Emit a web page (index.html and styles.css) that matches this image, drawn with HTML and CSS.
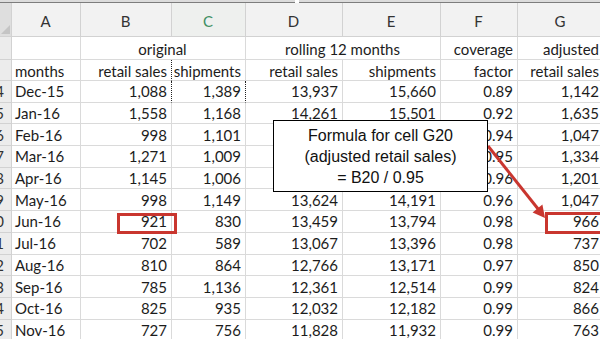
FILE: index.html
```html
<!DOCTYPE html>
<html>
<head>
<meta charset="utf-8">
<link rel="stylesheet" href="styles.css">
</head>
<body>
<div class="sheet">
  <div class="topbar"><span class="tab"></span></div>
  <div class="row hdr">
    <div class="cell corner"><span class="tri"></span></div>
    <div class="cell">A</div>
    <div class="cell">B</div>
    <div class="cell sel">C</div>
    <div class="cell">D</div>
    <div class="cell">E</div>
    <div class="cell">F</div>
    <div class="cell">G</div>
  </div>
  <div class="row r2">
    <div class="cell rn"></div>
    <div class="cell"></div>
    <div class="cell c span2">original</div>
    <div class="cell c span2">rolling 12 months</div>
    <div class="cell r">coverage</div>
    <div class="cell r">adjusted</div>
  </div>
  <div class="row r3">
    <div class="cell rn"></div>
    <div class="cell">months</div>
    <div class="cell r ants">retail sales</div>
    <div class="cell r">shipments</div>
    <div class="cell r">retail sales</div>
    <div class="cell r">shipments</div>
    <div class="cell r">factor</div>
    <div class="cell r">retail sales</div>
  </div>
  <div class="row data">
    <div class="cell rn"><span>14</span></div><div class="cell">Dec-15</div><div class="cell r ants">1,088</div><div class="cell r ants">1,389</div><div class="cell r">13,937</div><div class="cell r">15,660</div><div class="cell r">0.89</div><div class="cell r">1,142</div>
  </div>
  <div class="row data">
    <div class="cell rn"><span>15</span></div><div class="cell">Jan-16</div><div class="cell r">1,558</div><div class="cell r">1,168</div><div class="cell r">14,261</div><div class="cell r">15,501</div><div class="cell r">0.92</div><div class="cell r">1,635</div>
  </div>
  <div class="row data">
    <div class="cell rn"><span>16</span></div><div class="cell">Feb-16</div><div class="cell r">998</div><div class="cell r">1,101</div><div class="cell r"></div><div class="cell r"></div><div class="cell r">0.94</div><div class="cell r">1,047</div>
  </div>
  <div class="row data">
    <div class="cell rn"><span>17</span></div><div class="cell">Mar-16</div><div class="cell r">1,271</div><div class="cell r">1,009</div><div class="cell r"></div><div class="cell r"></div><div class="cell r">0.95</div><div class="cell r">1,334</div>
  </div>
  <div class="row data">
    <div class="cell rn"><span>18</span></div><div class="cell">Apr-16</div><div class="cell r">1,145</div><div class="cell r">1,006</div><div class="cell r"></div><div class="cell r"></div><div class="cell r">0.96</div><div class="cell r">1,201</div>
  </div>
  <div class="row data">
    <div class="cell rn"><span>19</span></div><div class="cell">May-16</div><div class="cell r">998</div><div class="cell r">1,149</div><div class="cell r">13,624</div><div class="cell r">14,191</div><div class="cell r">0.96</div><div class="cell r">1,047</div>
  </div>
  <div class="row data">
    <div class="cell rn"><span>20</span></div><div class="cell">Jun-16</div><div class="cell r">921</div><div class="cell r">830</div><div class="cell r">13,459</div><div class="cell r">13,794</div><div class="cell r">0.98</div><div class="cell r">966</div>
  </div>
  <div class="row data">
    <div class="cell rn"><span>21</span></div><div class="cell">Jul-16</div><div class="cell r">702</div><div class="cell r">589</div><div class="cell r">13,067</div><div class="cell r">13,396</div><div class="cell r">0.98</div><div class="cell r">737</div>
  </div>
  <div class="row data">
    <div class="cell rn"><span>22</span></div><div class="cell">Aug-16</div><div class="cell r">810</div><div class="cell r">864</div><div class="cell r">12,766</div><div class="cell r">13,171</div><div class="cell r">0.97</div><div class="cell r">850</div>
  </div>
  <div class="row data">
    <div class="cell rn"><span>23</span></div><div class="cell">Sep-16</div><div class="cell r">785</div><div class="cell r">1,136</div><div class="cell r">12,361</div><div class="cell r">12,514</div><div class="cell r">0.99</div><div class="cell r">824</div>
  </div>
  <div class="row data">
    <div class="cell rn"><span>24</span></div><div class="cell">Oct-16</div><div class="cell r">825</div><div class="cell r">935</div><div class="cell r">12,032</div><div class="cell r">12,182</div><div class="cell r">0.99</div><div class="cell r">866</div>
  </div>
  <div class="row data">
    <div class="cell rn"><span>25</span></div><div class="cell">Nov-16</div><div class="cell r">727</div><div class="cell r">756</div><div class="cell r">11,828</div><div class="cell r">11,932</div><div class="cell r">0.99</div><div class="cell r">763</div>
  </div>

  <div class="mark mark-b"></div>
  <div class="mark mark-g"></div>
  <svg class="arrow" width="600" height="339" viewBox="0 0 600 339">
    <line x1="488" y1="146" x2="538.5" y2="209.5" stroke="#c9362f" stroke-width="3"/>
    <polygon points="545,218 532.6,212.6 542.4,204.6" fill="#c9362f"/>
  </svg>
  <div class="callout">
    <div>Formula for cell G20</div>
    <div>(adjusted retail sales)</div>
    <div>= B20 / 0.95</div>
  </div>
</div>
</body>
</html>
```

FILE: styles.css
```css
html, body {
  margin: 0;
  padding: 0;
  background: #ffffff;
}
body {
  width: 600px;
  height: 339px;
  overflow: hidden;
  font-family: Lato, "Open Sans", sans-serif;
}
.sheet {
  position: relative;
  width: 600px;
  height: 339px;
  overflow: hidden;
}
.topbar {
  position: relative;
  height: 3px;
  background: #dcdcdc;
  border-bottom: 1px solid #7d7d7d;
  box-sizing: border-box;
}
.tab {
  position: absolute;
  left: 295px;
  top: 0;
  width: 4px;
  height: 3px;
  background: #ffffff;
}
.row {
  display: grid;
  grid-template-columns: 12px 69px 91px 74px 97px 98px 77px 86px;
  width: 604px;
}
.cell {
  box-sizing: border-box;
  border-right: 1px solid #dadada;
  border-bottom: 1px solid #dadada;
  display: flex;
  align-items: center;
  padding: 0 4px 0 3px;
  font-size: 15px;
  color: #1c1c1c;
  white-space: nowrap;
  overflow: hidden;
}
.r { justify-content: flex-end; }
.c { justify-content: center; }
.span2 { grid-column: span 2; }

.hdr { height: 34px; }
.hdr .cell {
  background: #f2f2f2;
  justify-content: center;
  color: #333333;
  border-color: #d2d2d2;
  font-size: 15px;
  padding-top: 3px;
}
.hdr .sel { color: #3f8f63; background: #eef0ee; }
.hdr .corner {
  position: relative;
  background: #dedede;
  padding: 0;
}
.tri {
  position: absolute;
  right: 1px;
  bottom: 2px;
  width: 0;
  height: 0;
  border-left: 9px solid transparent;
  border-bottom: 9px solid #c4c4c4;
}

.r2 { height: 23px; }
.r2 .cell { align-items: flex-end; padding-bottom: 1px; }
.r3 { height: 21px; }
.r3 .cell { align-items: flex-end; padding-bottom: 0; }
.data { height: 21.7px; }

.rn {
  background: #ececec;
  justify-content: flex-end;
  padding: 0 7px 0 0;
  border-color: #d2d2d2;
  color: #333333;
}
.ants { border-right: 1px dotted #222222; }

.mark {
  position: absolute;
  box-sizing: border-box;
  border: 3px solid #c9362f;
}
.mark-b { left: 117px; top: 213px; width: 60px; height: 21px; }
.mark-g { left: 545px; top: 212px; width: 70px; height: 22px; }

.arrow {
  position: absolute;
  left: 0;
  top: 0;
}
.callout {
  position: absolute;
  left: 273px;
  top: 120px;
  width: 215px;
  height: 72px;
  box-sizing: border-box;
  border: 1px solid #000000;
  background: #ffffff;
  padding-top: 4px;
  font-family: "Liberation Sans", Arial, sans-serif;
  font-size: 16px;
  line-height: 21px;
  text-align: center;
  color: #111111;
}
```
